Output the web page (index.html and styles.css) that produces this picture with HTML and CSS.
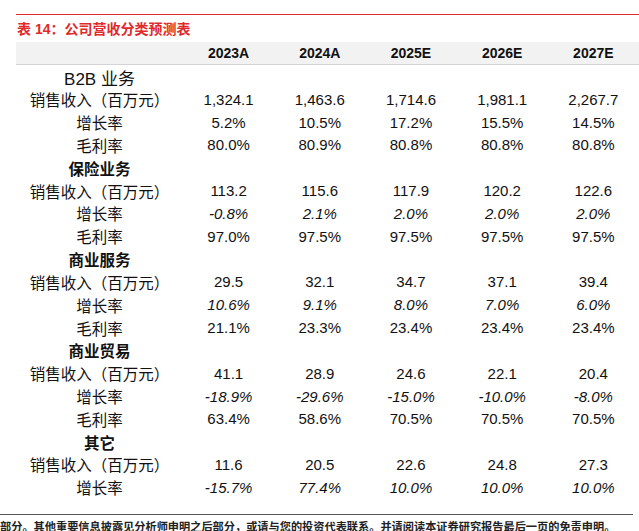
FILE: index.html
```html
<!DOCTYPE html>
<html lang="zh-CN">
<head>
<meta charset="utf-8">
<title>公司营收分类预测表</title>
<link rel="stylesheet" href="styles.css">
</head>
<body>
<div class="page">
  <div class="report">
    <div class="rule"></div>
    <div class="title">表 14：公司营收分类预测表</div>
    <div class="table">
      <div class="row head">
        <div class="label"></div>
        <div class="cell">2023A</div>
        <div class="cell">2024A</div>
        <div class="cell">2025E</div>
        <div class="cell">2026E</div>
        <div class="cell">2027E</div>
      </div>

      <div class="row"><div class="label lead">B2B 业务</div></div>
      <div class="row"><div class="label">销售收入（百万元）</div><div class="cell">1,324.1</div><div class="cell">1,463.6</div><div class="cell">1,714.6</div><div class="cell">1,981.1</div><div class="cell">2,267.7</div></div>
      <div class="row"><div class="label">增长率</div><div class="cell">5.2%</div><div class="cell">10.5%</div><div class="cell">17.2%</div><div class="cell">15.5%</div><div class="cell">14.5%</div></div>
      <div class="row"><div class="label">毛利率</div><div class="cell">80.0%</div><div class="cell">80.9%</div><div class="cell">80.8%</div><div class="cell">80.8%</div><div class="cell">80.8%</div></div>

      <div class="row"><div class="label section">保险业务</div></div>
      <div class="row"><div class="label">销售收入（百万元）</div><div class="cell">113.2</div><div class="cell">115.6</div><div class="cell">117.9</div><div class="cell">120.2</div><div class="cell">122.6</div></div>
      <div class="row italic"><div class="label">增长率</div><div class="cell">-0.8%</div><div class="cell">2.1%</div><div class="cell">2.0%</div><div class="cell">2.0%</div><div class="cell">2.0%</div></div>
      <div class="row"><div class="label">毛利率</div><div class="cell">97.0%</div><div class="cell">97.5%</div><div class="cell">97.5%</div><div class="cell">97.5%</div><div class="cell">97.5%</div></div>

      <div class="row"><div class="label section">商业服务</div></div>
      <div class="row"><div class="label">销售收入（百万元）</div><div class="cell">29.5</div><div class="cell">32.1</div><div class="cell">34.7</div><div class="cell">37.1</div><div class="cell">39.4</div></div>
      <div class="row italic"><div class="label">增长率</div><div class="cell">10.6%</div><div class="cell">9.1%</div><div class="cell">8.0%</div><div class="cell">7.0%</div><div class="cell">6.0%</div></div>
      <div class="row"><div class="label">毛利率</div><div class="cell">21.1%</div><div class="cell">23.3%</div><div class="cell">23.4%</div><div class="cell">23.4%</div><div class="cell">23.4%</div></div>

      <div class="row"><div class="label section">商业贸易</div></div>
      <div class="row"><div class="label">销售收入（百万元）</div><div class="cell">41.1</div><div class="cell">28.9</div><div class="cell">24.6</div><div class="cell">22.1</div><div class="cell">20.4</div></div>
      <div class="row italic"><div class="label">增长率</div><div class="cell">-18.9%</div><div class="cell">-29.6%</div><div class="cell">-15.0%</div><div class="cell">-10.0%</div><div class="cell">-8.0%</div></div>
      <div class="row"><div class="label">毛利率</div><div class="cell">63.4%</div><div class="cell">58.6%</div><div class="cell">70.5%</div><div class="cell">70.5%</div><div class="cell">70.5%</div></div>

      <div class="row"><div class="label section">其它</div></div>
      <div class="row"><div class="label">销售收入（百万元）</div><div class="cell">11.6</div><div class="cell">20.5</div><div class="cell">22.6</div><div class="cell">24.8</div><div class="cell">27.3</div></div>
      <div class="row italic"><div class="label">增长率</div><div class="cell">-15.7%</div><div class="cell">77.4%</div><div class="cell">10.0%</div><div class="cell">10.0%</div><div class="cell">10.0%</div></div>
    </div>
  </div>
  <div class="footer">部分。其他重要信息披露见分析师申明之后部分，或请与您的投资代表联系。并请阅读本证券研究报告最后一页的免责申明。</div>
</div>
</body>
</html>
```

FILE: styles.css
```css
html, body {
  margin: 0;
  padding: 0;
  background: #ffffff;
}

body {
  font-family: "Liberation Sans", "Noto Sans CJK SC", sans-serif;
  color: #111111;
  overflow: hidden;
}

.page {
  width: 639px;
  height: 531px;
  overflow: hidden;
}

.report {
  padding-left: 16px;
  padding-top: 14px;
}

.rule {
  height: 0;
  border-top: 1px solid #e12a2a;
}

.title {
  color: #e12a2a;
  font-size: 14px;
  font-weight: bold;
  line-height: 26px;
  padding-top: 1px;
  padding-left: 1px;
  white-space: nowrap;
}

.table {
  display: flex;
  flex-direction: column;
}

.row {
  display: grid;
  grid-template-columns: 167px repeat(5, 91.2px);
  height: 22.83px;
  align-items: center;
}

.row.head {
  height: 22px;
  background: #f2f2f2;
  border-bottom: 1px solid #d4d4d4;
  font-weight: bold;
  font-size: 14px;
}

.label {
  text-align: center;
  font-size: 15.5px;
  white-space: nowrap;
}

.label.lead {
  font-size: 17px;
}

.label.section {
  font-weight: bold;
}

.cell {
  text-align: center;
  font-size: 15px;
  white-space: nowrap;
}

.row.head .cell {
  font-size: 14px;
}

.row.italic .cell {
  font-style: italic;
}

.footer {
  margin-top: 15px;
  margin-right: 6px;
  border-top: 1.5px solid #555555;
  padding-top: 5px;
  font-size: 11.2px;
  line-height: 14px;
  font-weight: bold;
  color: #222222;
  white-space: nowrap;
}
```
